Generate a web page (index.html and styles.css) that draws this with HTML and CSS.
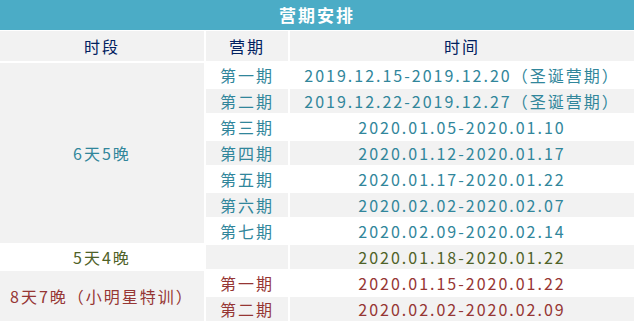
FILE: index.html
```html
<!DOCTYPE html>
<html lang="zh">
<head>
<meta charset="utf-8">
<link rel="stylesheet" href="styles.css">
</head>
<body>
<div class="title">营期安排</div>
<table class="sched">
  <colgroup><col class="c1"><col class="c2"><col class="c3"></colgroup>
  <thead>
    <tr><th>时段</th><th>营期</th><th class="last">时间</th></tr>
  </thead>
  <tbody>
    <tr class="teal w"><td class="grp g" rowspan="7">6天5晚</td><td>第一期</td><td class="last">2019.12.15-2019.12.20（圣诞营期）</td></tr>
    <tr class="teal g"><td>第二期</td><td class="last">2019.12.22-2019.12.27（圣诞营期）</td></tr>
    <tr class="teal w"><td>第三期</td><td class="last">2020.01.05-2020.01.10</td></tr>
    <tr class="teal g"><td>第四期</td><td class="last">2020.01.12-2020.01.17</td></tr>
    <tr class="teal w"><td>第五期</td><td class="last">2020.01.17-2020.01.22</td></tr>
    <tr class="teal g"><td>第六期</td><td class="last">2020.02.02-2020.02.07</td></tr>
    <tr class="teal w"><td>第七期</td><td class="last">2020.02.09-2020.02.14</td></tr>
    <tr class="olive g"><td class="grp w">5天4晚</td><td></td><td class="last">2020.01.18-2020.01.22</td></tr>
    <tr class="red w"><td class="grp g" rowspan="2">8天7晚（小明星特训）</td><td>第一期</td><td class="last">2020.01.15-2020.01.22</td></tr>
    <tr class="red g"><td>第二期</td><td class="last">2020.02.02-2020.02.09</td></tr>
  </tbody>
</table>
</body>
</html>
```
FILE: styles.css
```css
html, body {
  margin: 0;
  padding: 0;
  background: #ffffff;
}
body {
  width: 634px;
  font-family: "Noto Sans CJK SC", "Noto Sans", sans-serif;
  font-size: 16px;
  letter-spacing: 2px;
}
.title {
  height: 30px;
  line-height: 30px;
  margin-bottom: 1px;
  background: #4bacc6;
  color: #ffffff;
  font-weight: bold;
  font-size: 17px;
  text-align: center;
}
.sched {
  width: 634px;
  border-collapse: separate;
  border-spacing: 0;
  table-layout: fixed;
}
.c1 { width: 206px; }
.c2 { width: 84px; }
.c3 { width: 344px; }
.sched th,
.sched td {
  padding: 0;
  text-align: center;
  vertical-align: middle;
  border-right: 2px solid #ffffff;
  border-bottom: 2px solid #ffffff;
  white-space: nowrap;
}
.sched th {
  height: 30px;
  background: #f2f2f2;
  color: #002060;
  font-weight: normal;
}
.sched td {
  height: 24px;
  line-height: 24px;
}
.sched .last { border-right: 0; }
.sched tr.w td { background: #ffffff; }
.sched tr.g td { background: #f2f2f2; }
.sched td.grp.g { background: #f2f2f2; }
.sched td.grp.w { background: #ffffff; }
.teal td { color: #31869b; }
.olive td { color: #4f6228; }
.red td { color: #963634; }
```
